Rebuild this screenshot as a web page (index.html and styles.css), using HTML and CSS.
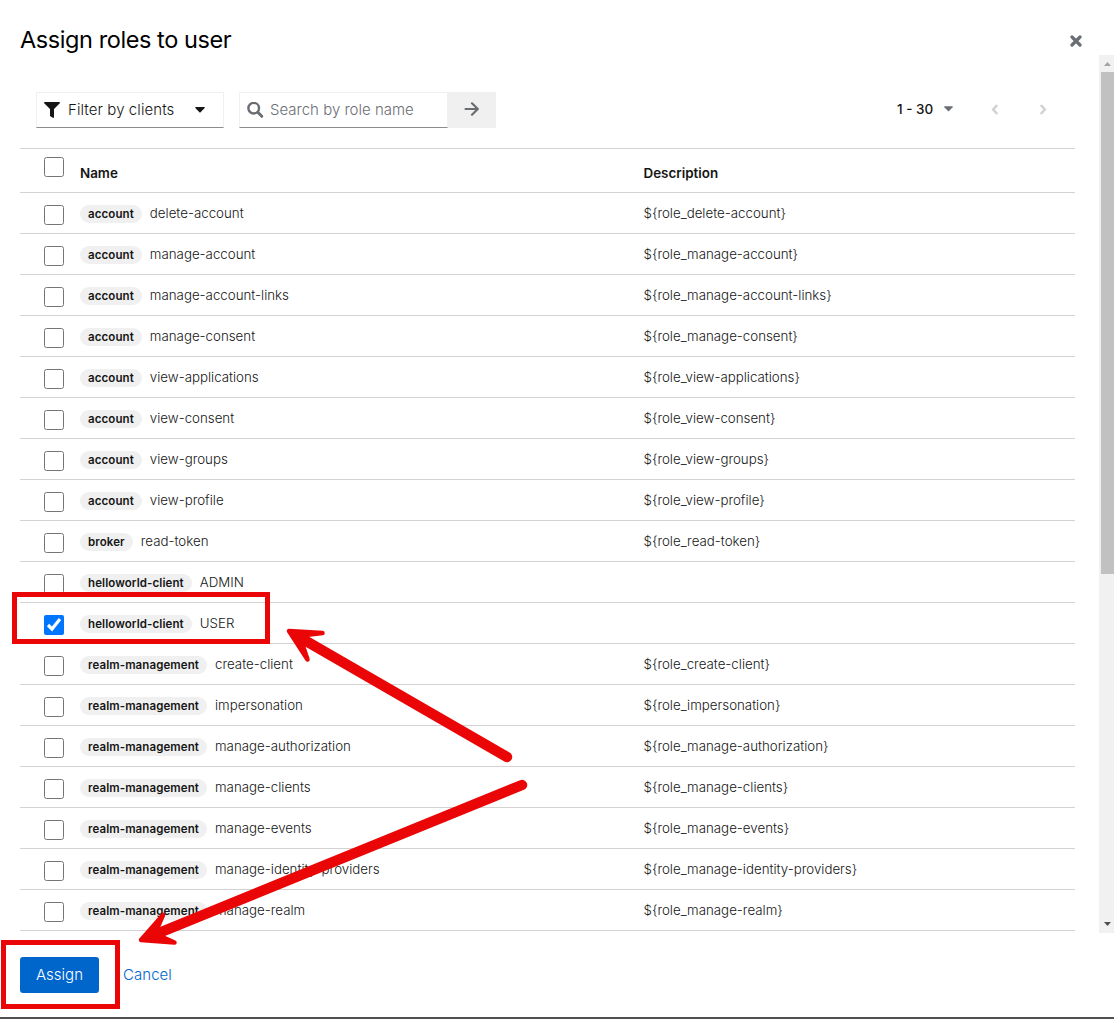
FILE: index.html
```html
<!DOCTYPE html>
<html lang="en">
<head>
<meta charset="utf-8">
<title>Assign roles to user</title>
<link rel="stylesheet" href="styles.css">
</head>
<body>
<div class="modal">
  <header class="modal-header">
    <h1>Assign roles to user</h1>
    <button class="close" aria-label="Close"><svg width="12" height="12" viewBox="0 0 12 12"><path d="M2 2L10 10M10 2L2 10" stroke="#6a6e73" stroke-width="3.200" stroke-linecap="round"/></svg></button>
  </header>
  <div class="modal-body">
    <div class="content">
      <div class="toolbar">
        <button class="filter">
          <svg width="16" height="16" viewBox="0 0 512 512"><path fill="#151515" d="M488 0H24C2.700 0-8 25.900 7 41L192 226v206c0 8 4 15 10 20l80 55c16 11 38 0 38-20V226L505 41c15-15 4-41-17-41z"/></svg>
          <span class="filter-text">Filter by clients</span>
          <svg class="caret" width="10" height="6" viewBox="0 0 10 6"><path fill="#151515" d="M.8 0h8.400q1 .3.4 1L5.600 5.200q-.6.5-1.200 0L.4 1Q-.2.300.8 0z"/></svg>
        </button>
        <div class="search">
          <div class="search-field">
            <svg width="17" height="17" viewBox="0 0 17 17"><circle cx="6.700" cy="6.200" r="5.300" fill="none" stroke="#6a6e73" stroke-width="2.400"/><path d="M10.800 10.300L14.800 14.300" stroke="#6a6e73" stroke-width="3" stroke-linecap="round"/></svg>
            <span class="placeholder">Search by role name</span>
          </div>
          <button class="go" aria-label="Search"><svg width="16" height="14" viewBox="0 0 16 14"><path d="M1.500 7H13.500M8 1.300L13.800 7L8 12.700" fill="none" stroke="#6a6e73" stroke-width="2.200" stroke-linecap="round" stroke-linejoin="round"/></svg></button>
        </div>
        <div class="pager">
          <span class="range">1 - 30</span>
          <svg class="range-caret" width="9" height="6" viewBox="0 0 10 6"><path fill="#6a6e73" d="M.8 0h8.400q1 .3.4 1L5.600 5.200q-.6.5-1.200 0L.4 1Q-.2.300.8 0z"/></svg>
          <svg class="prev" width="8" height="11" viewBox="0 0 8 11"><path d="M6.200 1L2.200 5.500L6.200 10" fill="none" stroke="#d2d2d2" stroke-width="2.600"/></svg>
          <svg class="next" width="8" height="11" viewBox="0 0 8 11"><path d="M1.800 1L5.800 5.500L1.800 10" fill="none" stroke="#d2d2d2" stroke-width="2.600"/></svg>
        </div>
      </div>
      <div class="table">
        <div class="row head"><input type="checkbox"><div class="name">Name</div><div class="desc">Description</div></div>
        <div class="row"><input type="checkbox"><div class="name"><span class="chip">account</span>delete-account</div><div class="desc">${role_delete-account}</div></div>
        <div class="row"><input type="checkbox"><div class="name"><span class="chip">account</span>manage-account</div><div class="desc">${role_manage-account}</div></div>
        <div class="row"><input type="checkbox"><div class="name"><span class="chip">account</span>manage-account-links</div><div class="desc">${role_manage-account-links}</div></div>
        <div class="row"><input type="checkbox"><div class="name"><span class="chip">account</span>manage-consent</div><div class="desc">${role_manage-consent}</div></div>
        <div class="row"><input type="checkbox"><div class="name"><span class="chip">account</span>view-applications</div><div class="desc">${role_view-applications}</div></div>
        <div class="row"><input type="checkbox"><div class="name"><span class="chip">account</span>view-consent</div><div class="desc">${role_view-consent}</div></div>
        <div class="row"><input type="checkbox"><div class="name"><span class="chip">account</span>view-groups</div><div class="desc">${role_view-groups}</div></div>
        <div class="row"><input type="checkbox"><div class="name"><span class="chip">account</span>view-profile</div><div class="desc">${role_view-profile}</div></div>
        <div class="row"><input type="checkbox"><div class="name"><span class="chip">broker</span>read-token</div><div class="desc">${role_read-token}</div></div>
        <div class="row"><input type="checkbox"><div class="name"><span class="chip">helloworld-client</span>ADMIN</div><div class="desc"></div></div>
        <div class="row"><input type="checkbox" checked><div class="name"><span class="chip">helloworld-client</span>USER</div><div class="desc"></div></div>
        <div class="row"><input type="checkbox"><div class="name"><span class="chip">realm-management</span>create-client</div><div class="desc">${role_create-client}</div></div>
        <div class="row"><input type="checkbox"><div class="name"><span class="chip">realm-management</span>impersonation</div><div class="desc">${role_impersonation}</div></div>
        <div class="row"><input type="checkbox"><div class="name"><span class="chip">realm-management</span>manage-authorization</div><div class="desc">${role_manage-authorization}</div></div>
        <div class="row"><input type="checkbox"><div class="name"><span class="chip">realm-management</span>manage-clients</div><div class="desc">${role_manage-clients}</div></div>
        <div class="row"><input type="checkbox"><div class="name"><span class="chip">realm-management</span>manage-events</div><div class="desc">${role_manage-events}</div></div>
        <div class="row"><input type="checkbox"><div class="name"><span class="chip">realm-management</span>manage-identity-providers</div><div class="desc">${role_manage-identity-providers}</div></div>
        <div class="row"><input type="checkbox"><div class="name"><span class="chip">realm-management</span>manage-realm</div><div class="desc">${role_manage-realm}</div></div>
      </div>
    </div>
    <div class="scrollbar">
      <svg class="arrow-up" width="7" height="4" viewBox="0 0 7 4"><path fill="#a3a3a3" d="M3.500 0L7 4H0z"/></svg>
      <div class="thumb"></div>
      <svg class="arrow-down" width="7" height="4" viewBox="0 0 7 4"><path fill="#505050" d="M0 0H7L3.500 4z"/></svg>
    </div>
  </div>
  <footer class="modal-footer">
    <button class="assign">Assign</button>
    <a class="cancel">Cancel</a>
  </footer>
  <div class="mark mark-row"></div>
  <div class="mark mark-assign"></div>
  <svg class="arrows" width="1114" height="1019" viewBox="0 0 1114 1019">
    <g fill="#ea0606" stroke="#ea0606" stroke-linecap="round" stroke-linejoin="round">
      <path d="M507 757L306 641" stroke-width="10.500"/>
      <path d="M289 631L322.500 633L306 635L302 643L307.500 659.500z" stroke-width="4.500"/>
      <path d="M522 785L160 932.500" stroke-width="10.500"/>
      <path d="M141 940L163 915L157 929L160 936L174.500 942.500z" stroke-width="4.500"/>
    </g>
  </svg>
</div>
</body>
</html>
```
FILE: styles.css
```css
* { box-sizing: border-box; }
body {
  margin: 0;
  background: #fff;
  color: #151515;
  font-family: Inter, "Noto Sans", sans-serif;
}
button { border: 0; background: none; padding: 0; font: inherit; color: inherit; }
svg { display: block; flex: none; }

.modal {
  position: relative;
  display: flex;
  flex-direction: column;
  height: 1019px;
  border-bottom: 2px solid #505050;
  overflow: hidden;
}
.modal-header {
  display: flex;
  justify-content: space-between;
  height: 55px;
  padding: 24px 32px 0 20px;
}
h1 {
  margin: 0;
  font-size: 23.5px;
  font-weight: 400;
  line-height: 32px;
  letter-spacing: -0.42px;
  color: #000;
}
.close { height: 12px; margin-top: 11px; }

.modal-body { display: flex; justify-content: space-between; height: 878px; }
.content { width: 1055px; margin-left: 20px; }
.toolbar { display: flex; height: 93px; padding: 37px 28px 0 16px; }
.filter, .search-field {
  display: flex;
  align-items: center;
  height: 36px;
  border: 1px solid #f0f0f0;
  border-bottom-color: #8a8d90;
  font-size: 15px;
  font-weight: 350;
}
.filter { width: 188px; padding-left: 7px; }
.filter-text { width: 127px; margin: 0 0 2px 8px; text-align: left; letter-spacing: 0.08px; white-space: nowrap; }
.search { display: flex; margin-left: 15px; }
.search-field { width: 209px; padding-left: 7px; }
.placeholder { margin: 0 0 2px 6px; color: #6a6e73; white-space: nowrap; }
.go {
  display: flex;
  align-items: center;
  justify-content: center;
  width: 48px;
  height: 36px;
  background: #f0f0f0;
  padding-bottom: 2px;
}
.pager { display: flex; align-items: center; height: 34px; margin-left: auto; }
.range { width: 36px; font-size: 13.5px; font-weight: 500; white-space: nowrap; }
.range-caret { margin-left: 11px; }
.prev { margin-left: 38px; }
.next { margin-left: 40px; }

.table { border-top: 1px solid #d2d2d2; }
.row {
  display: flex;
  height: 41px;
  padding: 12px 0 0 24px;
  border-bottom: 1px solid #d2d2d2;
  font-size: 13.3px;
  font-weight: 350;
  line-height: 16px;
}
.row input { flex: none; width: 20px; height: 20px; margin: 0; }
.name { display: flex; flex: none; width: 579.5px; padding-left: 16px; }
.chip {
  height: 18px;
  margin-right: 8px;
  padding: 0 8px;
  border-radius: 9px;
  background: #f0f0f0;
  font-size: 11.5px;
  font-weight: 600;
  line-height: 18px;
  letter-spacing: 0.1px;
}
.head { height: 44px; padding-top: 8px; font-weight: 600; font-size: 13.4px; }
.head .name, .head .desc { padding-top: 8px; }

.scrollbar {
  display: flex;
  flex-direction: column;
  align-items: flex-end;
  width: 15px;
  padding: 7px 0;
  background: #f1f1f1;
}
.arrow-up { margin-right: 3px; }
.thumb { width: 13px; height: 502px; margin-top: 6px; background: #c1c1c1; }
.arrow-down { margin: auto 3px 0 0; }

.modal-footer { display: flex; align-items: center; gap: 24px; padding: 24px 20px 0; font-size: 15px; font-weight: 350; }
.assign { width: 79px; height: 36px; padding-bottom: 2px; border-radius: 3px; background: #06c; color: #fff; }
.cancel { padding-bottom: 2px; color: #06c; letter-spacing: 0.05px; }

.mark { position: absolute; border: 5px solid #ea0606; }
.mark-row { left: 12px; top: 592px; width: 258px; height: 52px; }
.mark-assign { left: 1px; top: 940px; width: 119px; height: 69px; }
.arrows { position: absolute; left: 0; top: 0; }
```
